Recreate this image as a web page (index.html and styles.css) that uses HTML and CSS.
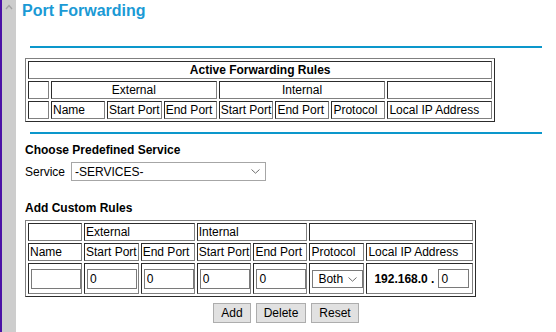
FILE: index.html
```html
<!DOCTYPE html>
<html lang="en">
<head>
    <meta charset="UTF-8">
    <title>Port Forwarding</title>
    <link rel="stylesheet" href="styles.css">
</head>
<body>
    <div class="scrollbar">
        <svg class="scroll-up" width="8" height="6" viewBox="0 0 8 6">
            <path d="M1 5 L4 1.5 L7 5" fill="none" stroke="#a3a3a3" stroke-width="1.4"/>
        </svg>
    </div>

    <div class="page">
        <h1>Port Forwarding</h1>
        <div class="rule"></div>

        <table class="grid active-rules">
            <tr>
                <td colspan="8" class="head">Active Forwarding Rules</td>
            </tr>
            <tr>
                <td></td>
                <td colspan="3" class="center">External</td>
                <td colspan="3" class="center">Internal</td>
                <td></td>
            </tr>
            <tr>
                <td class="w-blank"></td>
                <td class="w-col">Name</td>
                <td class="w-col">Start Port</td>
                <td class="w-col53">End Port</td>
                <td class="w-col">Start Port</td>
                <td class="w-col">End Port</td>
                <td class="w-col">Protocol</td>
                <td class="w-ip">Local IP Address</td>
            </tr>
        </table>

        <div class="rule rule-2"></div>

        <div class="section-title">Choose Predefined Service</div>
        <div class="service-row">
            <label for="service">Service</label>
            <div class="select-wrap service-select">
                <select id="service">
                    <option>-SERVICES-</option>
                </select>
                <svg class="chevron" width="9" height="5" viewBox="0 0 9 5">
                    <path d="M0.5 0.5 L4.5 4.2 L8.5 0.5" fill="none" stroke="#6e6e6e" stroke-width="1"/>
                </svg>
            </div>
        </div>

        <div class="section-title custom-title">Add Custom Rules</div>
        <table class="grid custom-rules">
            <tr>
                <td></td>
                <td colspan="2">External</td>
                <td colspan="2">Internal</td>
                <td colspan="2"></td>
            </tr>
            <tr>
                <td class="w-col">Name</td>
                <td class="w-col">Start Port</td>
                <td class="w-col">End Port</td>
                <td class="w-col">Start Port</td>
                <td class="w-col">End Port</td>
                <td class="w-col">Protocol</td>
                <td class="w-ip2">Local IP Address</td>
            </tr>
            <tr class="input-row">
                <td><input type="text" class="field"></td>
                <td><input type="text" class="field" value="0"></td>
                <td><input type="text" class="field" value="0"></td>
                <td><input type="text" class="field" value="0"></td>
                <td><input type="text" class="field" value="0"></td>
                <td>
                    <div class="select-wrap proto-select">
                        <select>
                            <option>Both</option>
                            <option>TCP</option>
                            <option>UDP</option>
                        </select>
                        <svg class="chevron" width="9" height="5" viewBox="0 0 9 5">
                            <path d="M0.5 0.5 L4.5 4.2 L8.5 0.5" fill="none" stroke="#6e6e6e" stroke-width="1"/>
                        </svg>
                    </div>
                </td>
                <td>
                    <div class="ip-cell">
                        <b>192.168.0 .</b>
                        <input type="text" class="field ip-field" value="0">
                    </div>
                </td>
            </tr>
        </table>

        <div class="buttons">
            <button type="button">Add</button>
            <button type="button">Delete</button>
            <button type="button">Reset</button>
        </div>
    </div>
</body>
</html>
```

FILE: styles.css
```css
body {
    margin: 0;
    font-family: "Liberation Sans", Arial, sans-serif;
    font-size: 12px;
    color: #000;
    background-color: #fff;
    display: flex;
    min-height: 100vh;
}

/* left frame edge with scrollbar */
.scrollbar {
    width: 14px;
    border-left: 2px solid #4b12a6;
    background-color: #cdcdcd;
    flex-shrink: 0;
}

.scroll-up {
    display: block;
    margin: 4px 0 0 3px;
}

.page {
    flex: 1;
    padding-left: 9px;
}

h1 {
    margin: 2px 0 0 -3px;
    font-size: 16px;
    line-height: 18px;
    font-weight: bold;
    color: #1b9ad5;
}

.rule {
    height: 2px;
    width: 512px;
    margin: 26px 0 0 5px;
    background-color: #0c97cb;
}

.rule-2 {
    margin-top: 10px;
}

/* tables */
.grid {
    border: 1px outset #808080;
    border-spacing: 2px;
    border-collapse: separate;
}

.grid td {
    box-sizing: border-box;
    border: 1px inset #808080;
    padding: 0 1px;
    height: 18px;
    line-height: 16px;
    white-space: nowrap;
    vertical-align: middle;
}

.active-rules {
    margin-top: 10px;
}

.head {
    font-weight: bold;
    text-align: center;
}

.center {
    text-align: center;
}

.w-blank { width: 21px; }
.w-col { width: 54px; }
.w-col53 { width: 53px; }
.w-ip { width: 105px; }
.w-ip2 { width: 107px; }

.section-title {
    margin-top: 9px;
    font-weight: bold;
    line-height: 14px;
}

.custom-title {
    margin-top: 20px;
}

.service-row {
    display: flex;
    align-items: center;
    gap: 6px;
    margin-top: 5px;
    height: 19px;
}

.select-wrap {
    position: relative;
}

.select-wrap select {
    appearance: none;
    -webkit-appearance: none;
    box-sizing: border-box;
    border: 1px solid #a6a6a6;
    border-radius: 0;
    background-color: #fff;
    font-family: "Liberation Sans", Arial, sans-serif;
    font-size: 12px;
    color: #000;
    padding: 0 0 0 3px;
    margin: 0;
    outline: none;
}

.chevron {
    position: absolute;
    top: 7px;
    right: 6px;
    pointer-events: none;
}

.service-select select {
    width: 195px;
    height: 19px;
}

.custom-rules {
    margin-top: 5px;
}

.input-row td {
    height: 31px;
    padding: 0 0 0 2px;
}

.field {
    box-sizing: border-box;
    width: 50px;
    height: 20px;
    border: 1px solid #7a7a7a;
    border-radius: 0;
    padding: 0 2px;
    margin: 0;
    font-family: "Liberation Sans", Arial, sans-serif;
    font-size: 12px;
    display: block;
}

.proto-select {
    width: 51px;
}

.proto-select select {
    width: 51px;
    height: 18px;
    padding-left: 5px;
    border-color: #7a7a7a;
}

.proto-select .chevron {
    top: 7px;
    right: 6px;
}

.ip-cell {
    display: flex;
    align-items: center;
    gap: 4px;
    padding-left: 5px;
}

.ip-field {
    width: 31px;
    height: 19px;
}

.buttons {
    margin-top: 6px;
    margin-left: -9px;
    display: flex;
    justify-content: center;
    gap: 5px;
}

.buttons button {
    height: 20px;
    padding: 0 7px;
    border: 1px solid #adadad;
    border-radius: 0;
    background-color: #e1e1e1;
    font-family: "Liberation Sans", Arial, sans-serif;
    font-size: 12px;
    color: #000;
    cursor: pointer;
}
```
